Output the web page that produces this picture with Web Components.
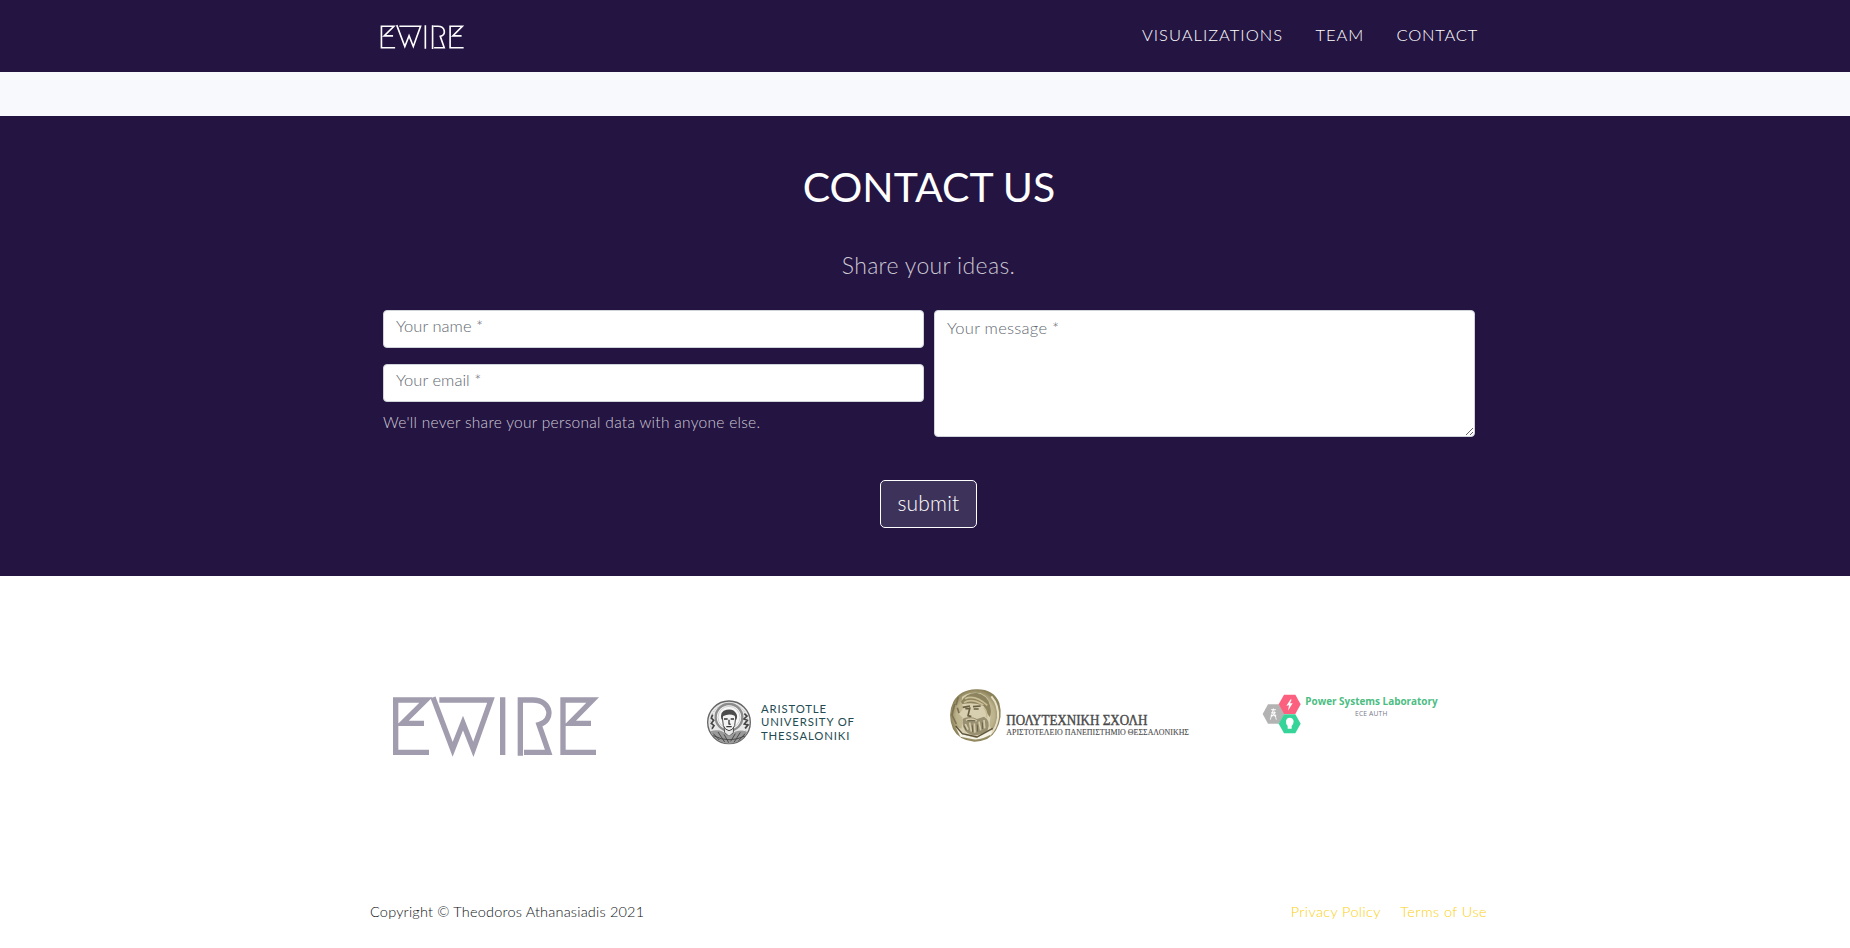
<!DOCTYPE html>
<html lang="en">
<head>
<meta charset="utf-8">
<title>EWIRE</title>
<style>
html,body{margin:0;background:#fff;font-family:Lato,"Open Sans",sans-serif;font-weight:300;height:948px;overflow:hidden}
</style>
</head>
<body>
<ewire-page></ewire-page>
<script>
const define = (name, html) => customElements.define(name, class extends HTMLElement {
  constructor() {
    super();
    const t = document.createElement('template');
    t.innerHTML = html;
    this.attachShadow({mode: 'open'}).append(t.content.cloneNode(true));
  }
});

define('ewire-mark', `
<style>
:host{display:block}
svg{display:block;width:100%;height:100%;overflow:visible}
g{fill:none;stroke:currentColor;stroke-width:var(--mark-stroke,16);stroke-miterlimit:6}
</style>
<svg viewBox="0 0 690 270" role="img" aria-label="EWIRE"><g>
<path d="M147 217H47V60H138L67 130H132"/>
<path d="M159 52L218 208L249 129L280 208L333 60H178"/>
<path d="M368 52V225M421 52V227M428 60H459C516 60 522 123 477 134L506 217H432"/>
<path d="M648 217H549V60H638L569 130H633"/>
</g></svg>`);

define('site-nav', `
<style>
:host{display:block;background:#241442;color:#fff;height:72px}
nav{width:1140px;margin:0 auto;height:72px;display:flex;align-items:flex-start;justify-content:space-between;box-sizing:border-box;padding:0 17px 0 20px}
.logo{padding-top:18px}
.links{display:flex;padding-top:25px;gap:32.5px;font-size:16.5px;line-height:20px}
span{white-space:nowrap}
</style>
<nav><div class="logo"><slot name="logo"></slot></div>
<div class="links"><span style="letter-spacing:1.02px">VISUALIZATIONS</span><span style="letter-spacing:.9px">TEAM</span><span style="letter-spacing:.75px">CONTACT</span></div></nav>`);

customElements.define('name-field', class extends HTMLElement {
  constructor() {
    super();
    const area = this.hasAttribute('multiline');
    const tag = area ? 'textarea' : 'input';
    this.attachShadow({mode: 'open'}).innerHTML = `
<style>
:host{display:block}
${tag}{display:block;width:100%;box-sizing:border-box;border:1px solid #ced4da;border-radius:4px;background:#fff;font:300 16.5px Lato,sans-serif;outline:0;margin:0;letter-spacing:${area ? .26 : .03}px;
${area ? 'height:127px;padding:7px 12px;resize:vertical;line-height:20px' : 'height:38px;padding:0 12px 6px'}}
::placeholder{color:#5f6871;opacity:1}
</style><${tag} placeholder="${this.getAttribute('label')}"></${tag}>`;
  }
});

define('contact-form', `
<style>
:host{display:block;background:#241442;height:460px;box-sizing:border-box;padding-top:47px;color:#fff;text-align:center}
h1{margin:0 0 38px;padding-left:8px;font:400 41px/48px Lato,sans-serif;letter-spacing:0}
p{margin:0;font-size:23px;line-height:32px;letter-spacing:.34px;color:#cbc8d2;padding-left:7px}
form{width:1092px;margin:29px auto 0;padding-left:8px;display:grid;grid-template-columns:541px 541px;gap:10px;text-align:left}
.left{display:flex;flex-direction:column}
name-field+name-field{margin-top:16px}
small{font-size:15.5px;line-height:22px;margin-top:9px;letter-spacing:.29px;color:#cfccd6;white-space:nowrap}
.action{display:flex;justify-content:center;padding:43px 0 0 7px}
button{width:97px;height:48px;box-sizing:border-box;border:1px solid #fff;border-radius:5px;background:#3d325a;color:#fff;font:300 21px/24px Lato,sans-serif;letter-spacing:.2px;padding:0 0 3px}
</style>
<h1>CONTACT US</h1><p>Share your ideas.</p>
<form><div class="left"><name-field label="Your name *"></name-field><name-field label="Your email *"></name-field><small>We'll never share your personal data with anyone else.</small></div>
<name-field multiline label="Your message *"></name-field></form>
<div class="action"><button type="button">submit</button></div>`);

define('auth-logo', `
<style>:host{display:block}svg{display:block;width:180px;height:80px}text{font-family:Lato,sans-serif;font-weight:400;font-size:34px;fill:#244b52}</style>
<svg viewBox="0 0 540 240">
<circle cx="117" cy="127" r="64" fill="#e8e8e8" stroke="#666" stroke-width="4"/>
<circle cx="117" cy="127" r="56" fill="none" stroke="#bbb" stroke-width="3" stroke-dasharray="4 4"/>
<circle cx="117" cy="112" r="40" fill="#f7f7f7" stroke="#8c8c8c" stroke-width="7"/>
<circle cx="117" cy="112" r="33" fill="none" stroke="#bbb" stroke-width="2"/>
<path d="M61 154Q82 147 99 155L117 171L135 155Q157 147 173 156Q157 189 117 191Q77 189 61 154Z" fill="#9a9a9a"/>
<path d="M70 161L88 180M84 156L104 186M102 163L116 188M165 161L146 182M151 157L132 187M136 161L122 184M70 167Q117 191 165 168" stroke="#4b4b4b" stroke-width="3" fill="none"/>
<path d="M102 139L104 158L117 169L130 158L131 139" fill="#e8e8e8" stroke="#555" stroke-width="3"/>
<path d="M97 112Q97 94 117 94Q137 94 137 112L134 137Q128 151 117 152Q105 150 100 137Z" fill="#f3f3f3" stroke="#444" stroke-width="3"/>
<path d="M94 119Q89 92 110 89Q131 85 139 101Q144 109 138 121L134 107Q117 99 100 108Z" fill="#4b4b4b"/>
<path d="M102 117H113M122 117H132M117 119V132L122 133M109 140H125" stroke="#333" stroke-width="4" fill="none"/>
<path d="M68 104L64 114L71 121L64 130L72 137L66 146M163 101L171 108L162 117L172 121L163 132L174 135L165 145" stroke="#444" stroke-width="5" fill="none"/>
<text x="213" y="98" textLength="195">ARISTOTLE</text><text x="213" y="139" textLength="279">UNIVERSITY OF</text><text x="213" y="181" textLength="265">THESSALONIKI</text>
</svg>`);

define('polytechnic-logo', `
<style>:host{display:block}svg{display:block;width:260px;height:70px}text{font-family:"Liberation Serif",serif;fill:#4a4a4a;stroke:#4a4a4a}</style>
<svg viewBox="0 0 780 210">
<defs><radialGradient id="coin" cx=".5" cy=".5"><stop offset="0" stop-color="#d0c8aa"/><stop offset=".75" stop-color="#bcb28b"/><stop offset="1" stop-color="#8b8159"/></radialGradient></defs>
<path d="M107 28Q161 26 178 69Q190 112 168 151Q150 184 103 185Q57 182 39 147Q21 103 40 65Q61 29 107 28Z" fill="url(#coin)"/>
<path d="M154 49Q177 76 174 113Q169 147 149 165" stroke="#e6e0c8" stroke-width="6" fill="none"/>
<path d="M66 51Q90 34 122 40Q148 51 153 85L149 137L158 153L115 175L60 160L50 141L65 146L67 112L57 103L68 88Z" fill="#d8cfb0"/>
<path d="M63 65Q80 37 111 39Q142 44 150 76Q156 98 149 111L139 97L131 78Q105 65 67 72Z" fill="#8d835e"/>
<path d="M72 68Q94 53 130 75M75 56Q105 42 142 76M131 83Q142 93 140 113" stroke="#c9bd95" stroke-width="5" fill="none"/>
<path d="M68 82L90 78M99 80L122 78M76 86H88M101 87H116M90 82L84 107L94 110" stroke="#675e41" stroke-width="5" fill="none"/>
<path d="M68 116Q89 106 111 117L132 110Q153 121 143 151Q121 170 94 164Q70 155 68 131Z" fill="#999071"/>
<path d="M78 121Q94 112 110 123M76 132L84 149M89 128L94 155M103 130L105 158M117 125L122 151M132 120L134 145" stroke="#d5cbaa" stroke-width="5" fill="none"/>
<path d="M82 122H106M72 137L79 151M97 136L98 156M112 134L113 155M127 127L128 147" stroke="#6b644b" stroke-width="3" fill="none"/>
<path d="M47 141L66 163L110 174L158 149L153 163Q128 180 100 178L61 170Z" fill="#f5f2e6"/>
<path d="M47 138L67 161L111 171L158 145" stroke="#5c533b" stroke-width="4" fill="none"/>
<path d="M44 72L36 105L49 132M55 51L48 75M52 83L57 99" stroke="#7d7351" stroke-width="5" fill="none"/>
<text x="199" y="136" font-size="41" stroke-width="1.2" textLength="423" lengthAdjust="spacingAndGlyphs">ΠΟΛΥΤΕΧΝΙΚΗ ΣΧΟΛΗ</text>
<text x="199" y="165" font-size="24" stroke-width=".3" textLength="548" lengthAdjust="spacingAndGlyphs">ΑΡΙΣΤΟΤΕΛΕΙΟ ΠΑΝΕΠΙΣΤΗΜΙΟ ΘΕΣΣΑΛΟΝΙΚΗΣ</text>
</svg>`);

define('power-lab-logo', `
<style>:host{display:block}svg{display:block;width:200px;height:70px}</style>
<svg viewBox="0 0 600 210">
<path d="M38 102L54 73H87L103 102L87 131H54Z" fill="#b3b3b3"/>
<path d="M86 73L102 44H136L152 73L136 102H102Z" fill="#fb607f"/>
<path d="M86 131L102 103H136L152 131L136 160H102Z" fill="#37d49a"/>
<path d="M122 58L109 77L117 76L114 92L128 70H120L125 59Z" fill="#fff"/>
<path d="M70 86L61 119M70 86L79 119M64 98H77M62 107H79M66 97L77 111M75 97L64 111M63 89H78" stroke="#fff" stroke-width="2.5" fill="none"/>
<path d="M113 138Q107 131 108 123Q110 113 119 113Q130 114 131 124Q131 131 125 138V146H113Z" fill="#fff"/>
<text x="166" y="76" font-family="Open Sans,sans-serif" font-weight="700" font-size="32" fill="#4dbd83" textLength="397" lengthAdjust="spacingAndGlyphs">Power Systems Laboratory</text>
<text x="315" y="108" font-family="Open Sans,sans-serif" font-weight="400" font-size="20" fill="#777a88" textLength="97">ECE AUTH</text>
</svg>`);

define('partner-row', `
<style>:host{display:grid;grid-template-columns:310px 250px 310px 200px;width:1140px;margin:0 auto;height:222px;box-sizing:border-box;padding:104px 0 0 25px}
ewire-mark{width:230px;height:90px;color:#a19cae}</style>
<ewire-mark></ewire-mark><auth-logo></auth-logo><polytechnic-logo></polytechnic-logo><power-lab-logo></power-lab-logo>`);

define('site-footer', `
<style>
:host{display:flex;justify-content:space-between;width:1140px;margin:0 auto;padding:104px 8px 25px 15px;font-size:14.5px;line-height:20px;color:#0e1114;box-sizing:border-box}
div{display:flex;gap:19.5px;color:#fbd010}
span{white-space:nowrap}
</style>
<span style="letter-spacing:.19px">Copyright © Theodoros Athanasiadis 2021</span>
<div><span style="letter-spacing:.36px">Privacy Policy</span><span style="letter-spacing:.43px">Terms of Use</span></div>`);

define('ewire-page', `
<style>
:host{display:block}
.band{height:44px;background:#f8f9fc}
.navmark{width:94.4px;height:37px;--mark-stroke:12}
</style>
<site-nav><ewire-mark slot="logo" class="navmark"></ewire-mark></site-nav>
<div class="band"></div>
<contact-form></contact-form>
<partner-row></partner-row>
<site-footer></site-footer>`);
</script>
</body>
</html>
